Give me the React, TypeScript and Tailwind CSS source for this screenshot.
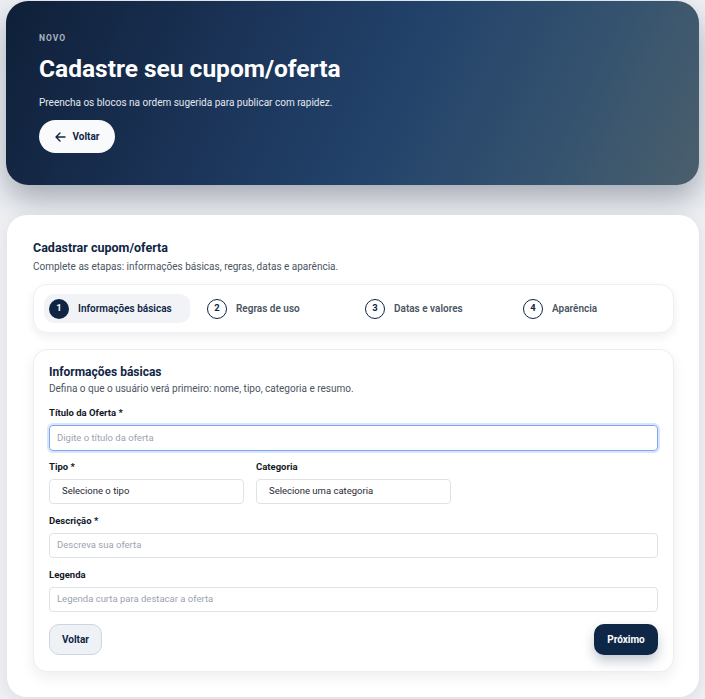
import React from "react";

const F = { fontFamily: "Roboto, 'Liberation Sans', sans-serif" };

function Step({ n, label, active }: { n: number; label: string; active?: boolean }) {
  return (
    <div className="flex">
      <div
        className={
          "flex items-center gap-[9px] h-[29px] rounded-[10px] pl-[5px] pr-[18px] whitespace-nowrap " +
          (active ? "bg-[#f1f3f6]" : "")
        }
      >
        <div
          className={
            "w-[20px] h-[20px] rounded-full flex items-center justify-center text-[9.5px] font-bold shrink-0 " +
            (active
              ? "bg-[#0f2544] text-white"
              : "border-[1.5px] border-[#0f2544] text-[#0f2544]")
          }
        >
          {n}
        </div>
        <span
          className={
            "text-[10px] font-semibold " + (active ? "text-[#0f2544]" : "text-[#4b5563]")
          }
        >
          {label}
        </span>
      </div>
    </div>
  );
}

function Label({ children }: { children: React.ReactNode }) {
  return <div className="text-[9.5px] font-bold text-[#111827] mb-[6px] leading-[12px]">{children}</div>;
}

export default function App() {
  return (
    <div style={F} className="min-h-[699px] bg-[#eef0f4] px-[6px] pt-[1px] pb-[4px]">
      <div
        className="rounded-[22px] h-[184px] px-[33px] pt-[32px] shadow-[0_14px_30px_rgba(30,41,59,0.35)]"
        style={{
          background:
            "linear-gradient(115deg, #0f1f38 0%, #1c355a 35%, #22426a 55%, #35536f 80%, #4b5f6c 100%)",
        }}
      >
        <div className="text-[8.5px] font-bold tracking-[1px] text-[#aab3bf] leading-[10px]">NOVO</div>
        <h1 className="mt-[11px] text-[24.5px] font-bold text-white leading-[30px]">
          Cadastre seu cupom/oferta
        </h1>
        <p className="mt-[12px] text-[10px] text-[#e2e8f0] leading-[13px]">
          Preencha os blocos na ordem sugerida para publicar com rapidez.
        </p>
        <button className="mt-[11px] h-[33px] w-[76px] rounded-full bg-[#f8fafc] flex items-center justify-center gap-[7px] text-[10px] font-bold text-[#0f2544]">
          <svg width="11" height="10" viewBox="0 0 11 10" fill="none">
            <path d="M10 5H1.5M5 1L1 5l4 4" stroke="#0f2544" strokeWidth="1.4" strokeLinecap="round" strokeLinejoin="round" />
          </svg>
          Voltar
        </button>
      </div>

      <div className="mt-[30px] ml-[1px] bg-white rounded-[20px] pl-[26px] pr-[25px] pt-[25px] pb-[25px] shadow-[0_4px_16px_rgba(15,23,42,0.08)]">
        <h2 className="text-[12.5px] font-bold text-[#0f2544] leading-[16px]">Cadastrar cupom/oferta</h2>
        <p className="mt-[5px] text-[10px] text-[#4b5563] leading-[12px]">
          Complete as etapas: informações básicas, regras, datas e aparência.
        </p>

        <div className="mt-[11px] rounded-[14px] border border-[#eef0f3] bg-white px-[10px] py-[9px] grid grid-cols-4 gap-[13px] shadow-[0_4px_10px_rgba(15,23,42,0.07)]">
          <Step n={1} label="Informações básicas" active />
          <Step n={2} label="Regras de uso" />
          <Step n={3} label="Datas e valores" />
          <Step n={4} label="Aparência" />
        </div>

        <div className="mt-[16px] rounded-[14px] border border-[#eceef2] bg-white px-[15px] pt-[14px] pb-[16px] shadow-[0_6px_14px_rgba(15,23,42,0.07)]">
          <h3 className="text-[12px] font-bold text-[#0f2544] leading-[16px]">Informações básicas</h3>
          <p className="mt-[3px] text-[10px] text-[#4b5563] leading-[12px]">
            Defina o que o usuário verá primeiro: nome, tipo, categoria e resumo.
          </p>

          <div className="mt-[12px]">
            <Label>Título da Oferta *</Label>
            <div className="h-[26px] rounded-[4px] border border-[#7ea6f0] shadow-[0_0_0_2px_rgba(147,180,240,0.35)] flex items-center px-[7px] text-[9.5px] text-[#9ca3af]">
              Digite o título da oferta
            </div>
          </div>

          <div className="mt-[10px] flex gap-[12px]">
            <div className="w-[195px]">
              <Label>Tipo *</Label>
              <div className="h-[25px] rounded-[4px] border border-[#dfe2e7] flex items-center px-[12px] text-[9.5px] text-[#1f2937]">
                Selecione o tipo
              </div>
            </div>
            <div className="w-[195px]">
              <Label>Categoria</Label>
              <div className="h-[25px] rounded-[4px] border border-[#dfe2e7] flex items-center px-[12px] text-[9.5px] text-[#1f2937]">
                Selecione uma categoria
              </div>
            </div>
          </div>

          <div className="mt-[11px]">
            <Label>Descrição *</Label>
            <div className="h-[25px] rounded-[4px] border border-[#dfe2e7] flex items-center px-[7px] text-[9.5px] text-[#9ca3af]">
              Descreva sua oferta
            </div>
          </div>

          <div className="mt-[11px]">
            <Label>Legenda</Label>
            <div className="h-[25px] rounded-[4px] border border-[#dfe2e7] flex items-center px-[7px] text-[9.5px] text-[#9ca3af]">
              Legenda curta para destacar a oferta
            </div>
          </div>

          <div className="mt-[12px] flex justify-between">
            <button className="h-[31px] w-[53px] rounded-[10px] bg-[#eef2f7] border border-[#cfd5dd] text-[10px] font-bold text-[#0f2544]">
              Voltar
            </button>
            <button className="h-[31px] w-[64px] rounded-[10px] bg-[#0f2747] text-[10px] font-bold text-white shadow-[0_6px_12px_rgba(15,39,71,0.25)]">
              Próximo
            </button>
          </div>
        </div>
      </div>
    </div>
  );
}
